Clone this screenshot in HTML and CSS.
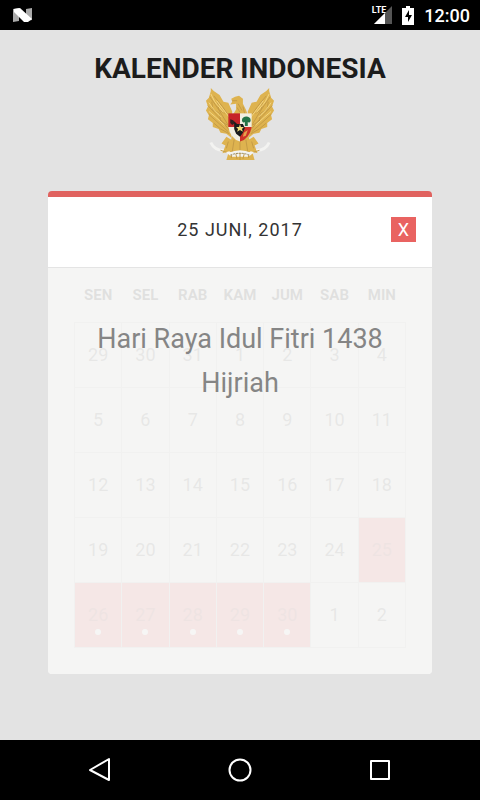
FILE: index.html
```html
<!DOCTYPE html>
<html lang="id">
<head>
    <meta charset="UTF-8">
    <meta name="viewport" content="width=device-width, initial-scale=1">
    <title>Kalender Indonesia</title>
    <link rel="stylesheet" href="styles.css">
</head>
<body>
    <div class="status-bar">
        <svg class="icon-n" width="20" height="16" viewBox="0 0 20 16">
            <path fill="#aaa" d="M0 2l6-1v13l-6 1zM13 2l6-1v12l-6 1z"/>
            <path fill="#fff" d="M1 2l6-1 12 11-4 3-4 0L1 5z"/>
        </svg>
        <div class="status-right">
            <div class="signal">
                <span class="lte">LTE</span>
                <svg width="18" height="18" viewBox="0 0 18 18">
                    <path fill="#555" d="M18 0v18H0z"/>
                    <path fill="#fff" d="M11 7v11H0z"/>
                </svg>
            </div>
            <svg width="12" height="19" viewBox="0 0 12 19">
                <path fill="#fff" d="M4 0h4v2h4v17H0V2h4z"/>
                <path fill="#000" d="M7 4L3 11h3v5l4-7H7z"/>
            </svg>
            <span class="clock">12:00</span>
        </div>
    </div>

    <main class="principal">
        <h1>KALENDER INDONESIA</h1>
        <svg class="garuda" width="70" height="76" viewBox="0 0 72 76">
            <!-- alas -->
            <path class="gold" d="M28 44h16l3 15 4 14H22l4-14z"/>
            <!-- sayap -->
            <g id="sayap">
                <path class="gold" d="M6 2L4 9 1 12l2 6-2 4 3 5-1 4 5 4 0 4 6 2 2 4 6 1 5 4 1-27-4-9-5-1-4-7-6-4-3-3z"/>
                <path class="feather" d="M5 8l9 13 11 18M3 17l11 12 11 13M4 26l11 10 9 8M9 7l9 11 8 12M9 35l7 6 9 5M7 13l1 8 7 4 1 8 7 4M13 14l1 7 6 4"/>
                <path class="light" d="M6 5l4 8 9 11M4 14l5 7 8 8M4 23l7 6 9 8M12 12l6 8 7 9"/>
            </g>
            <use href="#sayap" transform="translate(72 0) scale(-1 1)"/>
            <!-- kepala -->
            <path class="gold" d="M28 13l-1-3 4-2 4-1 4 3 0 5 3 6 3 8H27l5-8 0-6-6 1z"/>
            <path class="feather" d="M28 12l5 0M34 15l4 7M33 19l3 5M39 18l2 8"/>
            <!-- kaki dan pita -->
            <path class="ribbon" d="M6 55q4 9 15 8l7 5h16l7-5q11 1 15-8"/>
            <path class="gold" d="M22 49l8 5-5 10-7 2 3-8-4-2zM50 49l-8 5 5 10 7 2-3-8 4-2z"/>
            <path class="feather" d="M30 52l-3 19M36 53v20M42 52l3 19M31 64l2 8M41 64l-2 8M16 63l6 2M56 63l-6 2M24 54l-2 7M48 54l2 7"/>
            <path class="ribbon" d="M25 67q11-5 22 0"/>
            <path class="motto" d="M26 68q10-4 20 0"/>
            <!-- perisai -->
            <path fill="#c62329" d="M24 25h12v14H24z"/>
            <path fill="#f1eee0" d="M36 25h12v14H36z"/>
            <path fill="#f1eee0" d="M24 39h12v15q-10-3-12-15z"/>
            <path fill="#cf3128" d="M36 39h12q-2 12-12 15z"/>
            <path fill="#237446" d="M38 32c0-5 9-5 9 0 0 2-2 3-3 2v4h-3v-4c-1 1-3 0-3-2z"/>
            <path fill="#311f20" d="M26 31l3 1 2 3-3 2-2-2z"/>
            <path fill="#e6a24a" d="M40 45l4-3-2 6-3 1z"/>
            <path fill="#1a1b1c" d="M30 33l3 3h6l2 4-2 5-3 4-4-3-2-5z"/>
            <path fill="#f2dc78" d="M36 36l1 3h3l-2 2 1 3-3-2-3 2 1-3-2-2h3z"/>
        </svg>

        <section class="calendar">
            <header class="calendar-header">
                <h2>25 JUNI, 2017</h2>
                <button class="close" type="button" aria-label="Tutup">X</button>
            </header>
            <div class="calendar-body">
                <table>
                    <thead>
                        <tr><th>SEN</th><th>SEL</th><th>RAB</th><th>KAM</th><th>JUM</th><th>SAB</th><th>MIN</th></tr>
                    </thead>
                    <tbody>
                        <tr><td>29</td><td>30</td><td>31</td><td>1</td><td>2</td><td>3</td><td>4</td></tr>
                        <tr><td>5</td><td>6</td><td>7</td><td>8</td><td>9</td><td>10</td><td>11</td></tr>
                        <tr><td>12</td><td>13</td><td>14</td><td>15</td><td>16</td><td>17</td><td>18</td></tr>
                        <tr><td>19</td><td>20</td><td>21</td><td>22</td><td>23</td><td>24</td><td class="libur">25</td></tr>
                        <tr>
                            <td class="libur event">26</td>
                            <td class="libur event">27</td>
                            <td class="libur event">28</td>
                            <td class="libur event">29</td>
                            <td class="libur event">30</td>
                            <td>1</td>
                            <td>2</td>
                        </tr>
                    </tbody>
                </table>
                <div class="event-detail">
                    <p>Hari Raya Idul Fitri 1438 Hijriah</p>
                </div>
            </div>
        </section>
    </main>

    <nav class="nav-bar">
        <button type="button" aria-label="Kembali">
            <svg width="24" height="26" viewBox="0 0 24 26"><path d="M21 2v21L2 13z"/></svg>
        </button>
        <button type="button" aria-label="Beranda">
            <svg width="24" height="26" viewBox="0 0 24 26"><circle cx="12" cy="13" r="10.5"/></svg>
        </button>
        <button type="button" aria-label="Aplikasi terbaru">
            <svg width="24" height="26" viewBox="0 0 24 26"><rect x="3" y="4" width="18" height="18"/></svg>
        </button>
    </nav>
</body>
</html>
```

FILE: styles.css
```css
* {
    box-sizing: border-box;
}

body {
    margin: 0;
    min-height: 100vh;
    display: flex;
    flex-direction: column;
    font-family: Roboto, "Liberation Sans", sans-serif;
    background-color: #e3e3e3;
}

button {
    border: none;
    padding: 0;
    font-family: inherit;
    cursor: pointer;
}

/* barra de estado */
.status-bar {
    display: flex;
    justify-content: space-between;
    align-items: center;
    height: 30px;
    padding: 0 10px 0 13px;
    background-color: #000;
    color: #fff;
}

.status-right {
    display: flex;
    align-items: center;
    gap: 10px;
}

.signal {
    display: flex;
    align-items: flex-end;
    height: 18px;
}

.signal svg {
    margin-left: -12px;
}

.lte {
    align-self: flex-start;
    font-size: 9px;
    line-height: 9px;
    font-weight: 700;
}

.clock {
    font-size: 18px;
    font-weight: 500;
}

.principal {
    flex: 1;
    padding: 20px 10% 60px;
    text-align: center;
}

h1 {
    margin: 0;
    font-size: 28px;
    line-height: 38px;
    font-weight: 700;
    color: #1c1c1c;
}

/* lambang */
.garuda {
    display: block;
    margin: 0 auto 27px;
}

.gold {
    fill: #deb34f;
}

.feather {
    fill: none;
    stroke: #c39a45;
    stroke-width: 1;
}

.light {
    fill: none;
    stroke: #f4d784;
    stroke-width: 1;
}

.ribbon {
    fill: none;
    stroke: #f3f3f1;
    stroke-width: 3;
}

.motto {
    fill: none;
    stroke: #8e8360;
    stroke-width: 1;
    stroke-dasharray: 2 1;
}

/* kalender */
.calendar {
    overflow: hidden;
    border-top: 6px solid #e0625f;
    border-radius: 4px;
    background-color: #f4f4f4;
}

.calendar-header {
    display: grid;
    grid-template-columns: 25px 1fr 25px;
    align-items: start;
    padding: 20px 16px 24px;
    border-bottom: 1px solid #e4e4e4;
    background-color: #fff;
}

.calendar-header h2 {
    grid-column: 2;
    margin: 0;
    font-size: 18px;
    line-height: 26px;
    font-weight: 400;
    letter-spacing: 1px;
    color: #333;
}

.close {
    height: 25px;
    font-size: 18px;
    line-height: 24px;
    color: #fff;
    background-color: #e96361;
}

.calendar-body {
    position: relative;
    padding: 0 26px 26px;
}

table {
    width: 100%;
    border-collapse: collapse;
    table-layout: fixed;
}

th {
    height: 54px;
    padding: 0;
    font-size: 15px;
    font-weight: 700;
    color: #222;
}

td {
    height: 65px;
    padding: 0;
    border: 1px solid #ccc;
    font-size: 18px;
    color: #666;
}

.libur {
    color: #a44;
    background-color: #f06464;
}

.event::after {
    content: "";
    display: block;
    width: 6px;
    height: 6px;
    margin: 4px auto -10px;
    border-radius: 50%;
    background-color: #fff;
}

/* capa encima del calendario */
.event-detail {
    position: absolute;
    inset: 0;
    padding: 49px 26px;
    background-color: rgba(245, 245, 244, 0.9);
}

.event-detail p {
    margin: 0;
    font-size: 27px;
    line-height: 44px;
    color: #858585;
}

/* botones de android */
.nav-bar {
    display: flex;
    justify-content: center;
    align-items: center;
    gap: 116px;
    height: 60px;
    background-color: #000;
}

.nav-bar button {
    display: flex;
    background: none;
}

.nav-bar svg {
    fill: none;
    stroke: #fff;
    stroke-width: 2;
    stroke-linejoin: round;
}
```
